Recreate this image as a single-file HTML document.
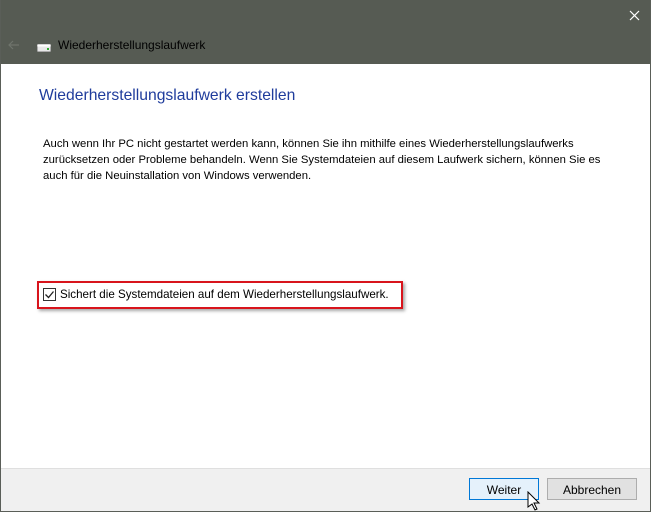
<!DOCTYPE html>
<html><head><meta charset="utf-8"><style>
body{margin:0;width:651px;height:512px;overflow:hidden;font-family:"Liberation Sans",sans-serif;background:#fff;position:relative}
.tb{position:absolute;left:0;top:0;width:651px;height:64px;background:#565b53}
.bl{position:absolute;top:0;bottom:0;width:1px;background:#5a5e58}
.t{position:absolute;font-size:12px;color:#000;white-space:nowrap}
.ft{position:absolute;left:1px;right:1px;top:468px;bottom:1px;background:#f0f0f0;border-top:1px solid #dfdfdf}
.btn{position:absolute;top:478px;height:22px;font-size:12px;text-align:center;line-height:22px;box-sizing:border-box}
</style></head><body>
<div class="tb"></div>
<div class="bl" style="left:0"></div><div class="bl" style="right:0"></div>
<div style="position:absolute;left:0;right:0;bottom:0;height:1px;background:#5a5e58"></div>
<svg style="position:absolute;left:8px;top:40px" width="12" height="10"><path d="M11 5H1M5 1L1 5l4 4" fill="none" stroke="#6f746c" stroke-width="1.2"/></svg>
<svg style="position:absolute;left:37px;top:42px" width="14" height="10"><rect x="0.5" y="2.5" width="13" height="7" rx="1" fill="#e8e8e8" stroke="#aaa"/><rect x="0.5" y="2.5" width="13" height="2" fill="#fff"/><rect x="10" y="6" width="2" height="2" fill="#3a3"/></svg>
<div class="t" style="left:58px;top:38px">Wiederherstellungslaufwerk</div>
<svg style="position:absolute;left:629px;top:10px" width="11" height="11"><path d="M1 1l9 9M10 1l-9 9" stroke="#fff" stroke-width="1.2"/></svg>
<div class="t" style="left:39px;top:87px;font-size:15.7px;color:#1f3c9c">Wiederherstellungslaufwerk erstellen</div>
<div class="t" style="left:43px;top:136px;line-height:16px;font-size:11.3px">Auch wenn Ihr PC nicht gestartet werden kann, können Sie ihn mithilfe eines Wiederherstellungslaufwerks<br>zurücksetzen oder Probleme behandeln. Wenn Sie Systemdateien auf diesem Laufwerk sichern, können Sie es<br>auch für die Neuinstallation von Windows verwenden.</div>
<div style="position:absolute;left:37px;top:281px;width:366px;height:28px;border:2px solid #d8141c;box-shadow:2px 2px 3px rgba(0,0,0,.35);box-sizing:border-box"></div>
<svg style="position:absolute;left:43px;top:288px" width="13" height="13"><rect x="0.5" y="0.5" width="12" height="12" fill="#fff" stroke="#333"/><path d="M2.5 6.5l3 3 5-6" fill="none" stroke="#222" stroke-width="1.3"/></svg>
<div class="t" style="left:60px;top:288px;font-size:11.6px">Sichert die Systemdateien auf dem Wiederherstellungslaufwerk.</div>
<div class="ft"></div>
<div class="btn" style="left:469px;width:70px;background:#e5f1fb;border:1px solid #0078d7">Weiter</div>
<div class="btn" style="left:547px;width:90px;background:#e1e1e1;border:1px solid #adadad">Abbrechen</div>
<svg style="position:absolute;left:527px;top:491px" width="14" height="21"><path d="M1 1v15l4-3 3 6 2-1-3-6h5z" fill="#fff" stroke="#000"/></svg>
</body></html>
